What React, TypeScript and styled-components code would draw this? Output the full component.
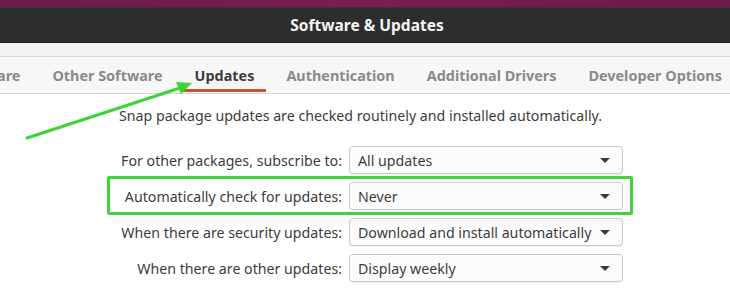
import styled, { createGlobalStyle } from "styled-components";

const GlobalStyle = createGlobalStyle`
  html, body {
    margin: 0;
    padding: 0;
    background: #ffffff;
  }
  body {
    font-family: "Noto Sans", "Open Sans", sans-serif;
    -webkit-font-smoothing: antialiased;
  }
`;

type Option = { label: string; value: string; highlighted?: boolean };

const tabs = [
  "Ubuntu Software",
  "Other Software",
  "Updates",
  "Authentication",
  "Additional Drivers",
  "Developer Options",
];

const rows: Option[] = [
  { label: "For other packages, subscribe to:", value: "All updates" },
  { label: "Automatically check for updates:", value: "Never", highlighted: true },
  { label: "When there are security updates:", value: "Download and install automatically" },
  { label: "When there are other updates:", value: "Display weekly" },
];

const ComboBox = ({ value }: { value: string }) => (
  <Combo>
    <ComboText>{value}</ComboText>
    <Caret />
  </Combo>
);

const Arrow = () => (
  <ArrowSvg width="730" height="299" viewBox="0 0 730 299">
    <line x1="27" y1="138" x2="180" y2="88" stroke="#3dd43a" strokeWidth="3" strokeLinecap="round" />
    <polygon points="192,83 176,82 181,94" fill="#3dd43a" />
  </ArrowSvg>
);

const App = () => {
  return (
    <Page>
      <GlobalStyle />
      <TopStrip />
      <TitleBar>
        <Title>Software &amp; Updates</Title>
      </TitleBar>
      <HeaderGap />
      <TabBar>
        <TabRow>
          {tabs.map((t) => (
            <Tab key={t} $active={t === "Updates"}>
              {t}
            </Tab>
          ))}
        </TabRow>
      </TabBar>
      <Content>
        <Description>
          Snap package updates are checked routinely and installed automatically.
        </Description>
        <Form>
          {rows.map((r) => (
            <Row key={r.label} $highlighted={r.highlighted}>
              <Label>{r.label}</Label>
              <ComboBox value={r.value} />
            </Row>
          ))}
        </Form>
      </Content>
      <Arrow />
    </Page>
  );
};

export default App;

const Page = styled.div`
  position: relative;
  width: 730px;
  height: 299px;
  overflow: hidden;
  background: #ffffff;
`;

const TopStrip = styled.div`
  height: 7px;
  background: linear-gradient(90deg, #6a1a4c 0%, #7a1d52 50%, #6c1849 100%);
`;

const TitleBar = styled.div`
  height: 36px;
  display: flex;
  align-items: center;
  justify-content: center;
  background: #2d2d2d;
  border-top: 1px solid #3a3336;
  border-bottom: 1px solid #1f1f1f;
  box-sizing: border-box;
`;

const Title = styled.span`
  color: #f4f4f4;
  font-weight: 700;
  font-size: 15.5px;
  margin-left: 4px;
`;

const HeaderGap = styled.div`
  height: 13px;
  background: #f3f3f3;
  border-bottom: 1px solid #d8d8d8;
`;

const TabBar = styled.div`
  height: 36px;
  background: #f7f7f7;
  border-bottom: 1px solid #d6d6d6;
  overflow: hidden;
`;

const TabRow = styled.div`
  display: flex;
  height: 100%;
  margin-left: -118px;
`;

const Tab = styled.div<{ $active?: boolean }>`
  position: relative;
  flex: none;
  display: flex;
  align-items: center;
  padding: 0 16px;
  font-size: 14.4px;
  font-weight: 700;
  color: ${(p) => (p.$active ? "#3c3c3c" : "#8a8a8a")};

  &::after {
    content: "";
    display: ${(p) => (p.$active ? "block" : "none")};
    position: absolute;
    left: 4px;
    right: 4px;
    bottom: 1px;
    height: 3px;
    background: #c4572f;
  }
`;

const Content = styled.div`
  display: flex;
  flex-direction: column;
`;

const Description = styled.div`
  margin: 13px 0 0 119px;
  font-size: 14.2px;
  color: #3c3c3c;
  line-height: 18px;
`;

const Form = styled.div`
  display: flex;
  flex-direction: column;
  gap: 8px;
  margin: 21px 0 0 122px;
  width: 501px;
`;

const Row = styled.div<{ $highlighted?: boolean }>`
  position: relative;
  display: flex;
  align-items: center;
  justify-content: flex-end;
  gap: 7px;

  &::after {
    content: "";
    display: ${(p) => (p.$highlighted ? "block" : "none")};
    position: absolute;
    left: -15px;
    right: -10px;
    top: -6px;
    bottom: -5px;
    border: 3px solid #41d33d;
    border-radius: 2px;
  }
`;

const Label = styled.span`
  font-size: 14.2px;
  color: #3c3c3c;
  white-space: nowrap;
`;

const Combo = styled.div`
  box-sizing: border-box;
  width: 274px;
  height: 28px;
  flex: none;
  display: flex;
  align-items: center;
  justify-content: space-between;
  padding: 0 12px 0 8px;
  background: #fcfcfc;
  border: 1px solid #cdc7c2;
  border-radius: 4px;
  box-shadow: 0 1px 1px rgba(0, 0, 0, 0.06);
`;

const ComboText = styled.span`
  font-size: 14.2px;
  color: #3c3c3c;
  white-space: nowrap;
`;

const Caret = styled.span`
  width: 0;
  height: 0;
  border-left: 5px solid transparent;
  border-right: 5px solid transparent;
  border-top: 5px solid #3a3a3a;
`;

const ArrowSvg = styled.svg`
  position: absolute;
  left: 0;
  top: 0;
  pointer-events: none;
`;
